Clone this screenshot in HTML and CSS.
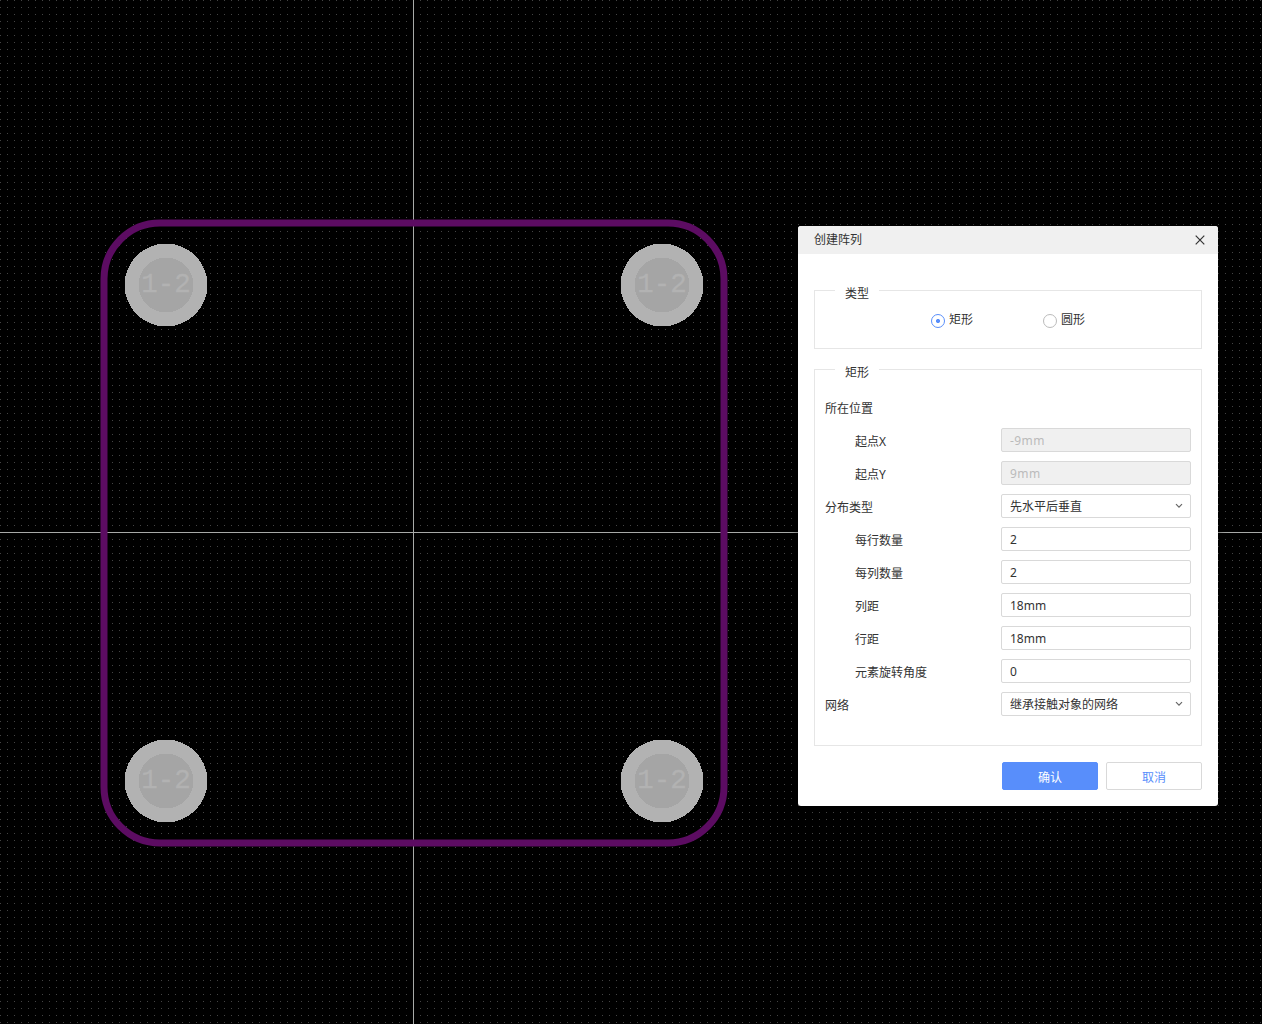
FILE: index.html
```html
<!DOCTYPE html>
<html lang="zh-CN">
<head>
  <meta charset="UTF-8" />
  <meta name="viewport" content="width=device-width, initial-scale=1" />
  <title>创建阵列</title>
  <link rel="stylesheet" href="styles.css">
</head>
<body>
  <svg class="board" width="1262" height="1024" viewBox="0 0 1262 1024">
    <defs>
      <pattern id="grid" width="7" height="7" patternUnits="userSpaceOnUse">
        <rect width="1" height="1" fill="#444" />
      </pattern>
      <g id="pad">
        <circle r="41.5" fill="#b2b2b2" />
        <circle r="27.5" fill="#a5a5a5" />
        <text class="pad-label" y="7">1-2</text>
      </g>
    </defs>
    <rect width="1262" height="1024" fill="url(#grid)" />

    <!-- origin axes -->
    <rect class="axis" x="413" y="0" width="1" height="1024" />
    <rect class="axis" x="0" y="532" width="1262" height="1" />

    <!-- board outline -->
    <rect class="outline" x="104" y="223" width="620" height="620" rx="56" />

    <use href="#pad" x="166" y="285" />
    <use href="#pad" x="662" y="285" />
    <use href="#pad" x="166" y="781" />
    <use href="#pad" x="662" y="781" />
  </svg>

  <div class="dialog">
    <header class="dialog-header">
      <span>创建阵列</span>
      <svg class="close" width="10" height="10" viewBox="0 0 10 10">
        <path d="M0.7 0.7L9.3 9.3M9.3 0.7L0.7 9.3" />
      </svg>
    </header>

    <form class="dialog-body">
      <section class="group type-group">
        <h3 class="group-title">类型</h3>
        <div class="radios">
          <label class="radio"><span class="dot checked"></span>矩形</label>
          <label class="radio"><span class="dot"></span>圆形</label>
        </div>
      </section>

      <section class="group rect-group">
        <h3 class="group-title">矩形</h3>
        <div class="rows">
          <div class="row"><label>所在位置</label></div>
          <div class="row sub"><label>起点X</label><div class="field disabled">-9mm</div></div>
          <div class="row sub"><label>起点Y</label><div class="field disabled">9mm</div></div>
          <div class="row">
            <label>分布类型</label>
            <div class="field select">先水平后垂直
              <svg class="arrow" width="8" height="6" viewBox="0 0 8 6"><path d="M1 1.2L4 4.2L7 1.2" /></svg>
            </div>
          </div>
          <div class="row sub"><label>每行数量</label><div class="field">2</div></div>
          <div class="row sub"><label>每列数量</label><div class="field">2</div></div>
          <div class="row sub"><label>列距</label><div class="field">18mm</div></div>
          <div class="row sub"><label>行距</label><div class="field">18mm</div></div>
          <div class="row sub"><label>元素旋转角度</label><div class="field">0</div></div>
          <div class="row">
            <label>网络</label>
            <div class="field select">继承接触对象的网络
              <svg class="arrow" width="8" height="6" viewBox="0 0 8 6"><path d="M1 1.2L4 4.2L7 1.2" /></svg>
            </div>
          </div>
        </div>
      </section>

      <div class="actions">
        <button type="button" class="btn primary">确认</button>
        <button type="button" class="btn">取消</button>
      </div>
    </form>
  </div>
</body>
</html>
```
FILE: styles.css
```css
* {
  box-sizing: border-box;
}

body {
  margin: 0;
  height: 1024px;
  position: relative;
  overflow: hidden;
  background: #000;
  font-family: "Noto Sans", "Noto Sans CJK SC", sans-serif;
  font-size: 12px;
  color: #333;
}

.board {
  display: block;
}

.board circle {
  shape-rendering: crispEdges;
}

.axis {
  fill: #a8aaa8;
}

.outline {
  fill: none;
  stroke: #5c0c62;
  stroke-width: 7;
}

.pad-label {
  font-family: "Liberation Mono", monospace;
  font-size: 27.5px;
  text-anchor: middle;
  fill: #b2b2b2;
  stroke: #b2b2b2;
  stroke-width: 0.3;
}

/* floating window */
.dialog {
  position: absolute;
  left: 798px;
  top: 226px;
  width: 420px;
  height: 580px;
  background: #fff;
  border-radius: 3px;
  box-shadow: 0 0 10px rgba(0, 0, 0, 0.5);
  overflow: hidden;
}

.dialog-header {
  display: flex;
  justify-content: space-between;
  align-items: center;
  height: 28px;
  padding: 0 13px 0 16px;
  background: #f0f0f0;
  line-height: 26px;
}

.close path {
  fill: none;
  stroke: #333;
  stroke-width: 1.2;
}

.dialog-body {
  padding: 36px 16px 0;
}

.group {
  border: 1px solid #e6e6e6;
}

.type-group {
  height: 59px;
  margin-bottom: 20px;
}

.rect-group {
  height: 377px;
}

.group-title {
  width: 44px;
  height: 18px;
  margin: -8px 0 0 20px;
  background: #fff;
  font-size: 12px;
  font-weight: normal;
  line-height: 21px;
  text-align: center;
}

.radios {
  display: flex;
  gap: 70px;
  padding: 9px 0 0 116px;
}

.radio {
  display: flex;
  align-items: center;
  gap: 4px;
  height: 20px;
  line-height: 18px;
}

.dot {
  width: 14px;
  height: 14px;
  margin-top: 2px;
  border: 1px solid #bbb;
  border-radius: 50%;
}

.dot.checked {
  border-color: #588efb;
  background: radial-gradient(circle, #588efb 1.8px, transparent 2.3px);
}

.rows {
  display: flex;
  flex-direction: column;
  gap: 9px;
  padding: 15px 10px 0;
}

.row {
  display: flex;
  justify-content: space-between;
  height: 24px;
}

.row label {
  line-height: 28px;
}

.row.sub {
  padding-left: 30px;
}

.field {
  display: flex;
  align-items: center;
  justify-content: space-between;
  width: 190px;
  height: 24px;
  padding: 2px 7px 0 8px;
  border: 1px solid #d9d9d9;
  border-radius: 2px;
  line-height: 20px;
}

.field.disabled {
  background: #f0f0f0;
  color: #bbb;
  letter-spacing: 0.4px;
}

.arrow {
  margin-bottom: 2px;
}

.arrow path {
  fill: none;
  stroke: #666;
  stroke-width: 1.2;
}

.actions {
  display: flex;
  justify-content: flex-end;
  gap: 8px;
  margin-top: 16px;
}

.btn {
  width: 96px;
  height: 28px;
  padding: 1px 0 0;
  border: 1px solid #d9d9d9;
  border-radius: 2px;
  background: #fff;
  color: #588efb;
  font-family: inherit;
  font-size: 12px;
}

.btn.primary {
  border-color: #588efb;
  background: #588efb;
  color: #fff;
}
```
